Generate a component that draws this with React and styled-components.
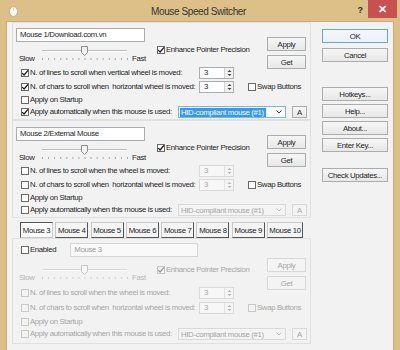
import styled, { createGlobalStyle } from "styled-components";

const TEXT = "#1e1e1e";
const DIM = "#a6a6a6";

const GlobalStyle = createGlobalStyle`
  * { box-sizing: border-box; }
  html, body { margin: 0; padding: 0; }
  body {
    width: 400px;
    height: 350px;
    overflow: hidden;
    background: #dcc088;
    font-family: "Liberation Sans", Arial, sans-serif;
    font-size: 7.8px;
    letter-spacing: -0.34px;
    color: ${TEXT};
  }
`;

const Window = styled.div`
  width: 400px;
  height: 350px;
  display: flex;
  flex-direction: column;
  background: #dcc088;
`;

const TitleBar = styled.div`
  height: 21px;
  flex-shrink: 0;
  display: grid;
  grid-template-columns: 1fr auto 1fr;
  align-items: start;
  padding-right: 3px;
`;

const AppIcon = styled.div`
  justify-self: start;
  display: flex;
  padding: 6px 0 0 9px;
`;

const Title = styled.div`
  font-size: 10px;
  letter-spacing: -0.4px;
  line-height: 12px;
  padding-top: 6px;
  color: #333;
`;

const Controls = styled.div`
  justify-self: end;
  display: flex;
  align-items: flex-start;
`;

const HelpGlyph = styled.span`
  font-size: 9px;
  font-weight: bold;
  letter-spacing: 0;
  color: #2b2b2b;
  margin: 5px 5px 0 0;
`;

const CloseButton = styled.div`
  width: 29px;
  height: 18px;
  background: #c75150;
  color: #fff;
  display: flex;
  align-items: center;
  justify-content: center;
  font-size: 11px;
  font-weight: bold;
  letter-spacing: 0;
`;

const Client = styled.div`
  flex: 1;
  min-height: 0;
  margin: 0 6px;
  background: #f2f2f2;
  border: 1px solid #c6ad7a;
  border-bottom: none;
  display: flex;
  gap: 11px;
  padding: 0 4px 0 5px;
`;

const LeftCol = styled.div`
  width: 299px;
  flex-shrink: 0;
  display: flex;
  flex-direction: column;
`;

const RightCol = styled.div`
  width: 66px;
  display: flex;
  flex-direction: column;
  padding-top: 7px;
`;

const Panel = styled.div`
  border: 1px solid #e0e0e0;
  padding-bottom: ${({ $pb }) => $pb || 0}px;
`;

const Top = styled.div`
  height: ${({ $h }) => $h}px;
  display: grid;
  grid-template-columns: 137px 117px 39px;
  align-items: start;
`;

const NameCol = styled.div`
  display: flex;
  flex-direction: column;
  padding-top: ${({ $pt }) => $pt}px;
`;

const MidCol = styled.div`
  padding: ${({ $pt }) => $pt}px 0 0 7px;
`;

const ButtonCol = styled.div`
  display: flex;
  flex-direction: column;
  gap: 4px;
  padding-top: ${({ $pt }) => $pt}px;
`;

const TextBox = styled.div`
  margin-left: ${({ $ml }) => $ml || 0}px;
  width: ${({ $w }) => $w}px;
  height: 14px;
  border: 1px solid ${({ $disabled }) => ($disabled ? "#d6d6d6" : "#abadb3")};
  background: ${({ $disabled }) => ($disabled ? "#f9f9f9" : "#fff")};
  color: ${({ $disabled }) => ($disabled ? "#9d9d9d" : TEXT)};
  padding-left: 3px;
  line-height: 12px;
  white-space: nowrap;
  overflow: hidden;
`;

const SliderBlock = styled.div`
  display: grid;
  grid-template-columns: 21px 90px auto;
  align-items: end;
  height: 20px;
  padding-left: 6px;
  margin-top: ${({ $mt }) => $mt}px;
  color: ${({ $disabled }) => ($disabled ? "#b4b4b4" : TEXT)};
`;

const SliderLabel = styled.span`
  line-height: 9px;
  margin-left: ${({ $ml }) => $ml || 0}px;
`;

const Row = styled.div`
  height: ${({ $h }) => $h}px;
  display: flex;
  align-items: center;
  padding-left: 8px;
`;

const CheckWrap = styled.div`
  display: flex;
  align-items: center;
  gap: 1px;
  width: ${({ $w }) => ($w ? `${$w}px` : "auto")};
  flex-shrink: 0;
  height: 10px;
  line-height: 10px;
  white-space: pre;
  color: ${({ $disabled }) => ($disabled ? DIM : TEXT)};
  margin-left: ${({ $ml }) => $ml || 0}px;
`;

const Box = styled.span`
  width: 8px;
  height: 8px;
  flex-shrink: 0;
  border: 1px solid ${({ $disabled }) => ($disabled ? "#c8c8c8" : "#6b6b6b")};
  background: ${({ $disabled }) => ($disabled ? "#f3f3f3" : "#fff")};
  display: flex;
  align-items: center;
  justify-content: center;
  overflow: visible;
`;

const Spin = styled.div`
  width: 35px;
  height: 12px;
  flex-shrink: 0;
  display: flex;
  border: 1px solid ${({ $disabled }) => ($disabled ? "#d9d9d9" : "#abadb3")};
  background: ${({ $disabled }) => ($disabled ? "#f7f7f7" : "#fff")};
  color: ${({ $disabled }) => ($disabled ? DIM : TEXT)};
`;

const SpinValue = styled.span`
  flex: 1;
  padding-left: 4px;
  line-height: 10px;
`;

const SpinArrows = styled.span`
  width: 9px;
  border-left: 1px solid ${({ $disabled }) => ($disabled ? "#e2e2e2" : "#d0d0d0")};
  background: ${({ $disabled }) => ($disabled ? "#f4f4f4" : "#f0f0f0")};
  display: flex;
  align-items: center;
  justify-content: center;
`;

const Combo = styled.div`
  width: 108px;
  height: 12px;
  flex-shrink: 0;
  display: flex;
  align-items: center;
  justify-content: space-between;
  padding: 1px 3px 1px 1px;
  border: 1px solid ${({ $disabled }) => ($disabled ? "#d9d9d9" : "#7eb4ea")};
  background: ${({ $disabled }) => ($disabled ? "#f4f4f4" : "#fff")};
  color: ${({ $disabled }) => ($disabled ? DIM : TEXT)};
`;

const ComboText = styled.span`
  height: 9px;
  line-height: 9px;
  padding: 0 2px 0 1px;
  white-space: nowrap;
  background: ${({ $selected }) => ($selected ? "#3399ff" : "transparent")};
  color: ${({ $selected }) => ($selected ? "#fff" : "inherit")};
`;

const Btn = styled.div`
  height: ${({ $h }) => $h || 14}px;
  width: ${({ $w }) => ($w ? `${$w}px` : "auto")};
  flex-shrink: 0;
  display: flex;
  align-items: center;
  justify-content: center;
  white-space: nowrap;
  margin-top: ${({ $mt }) => $mt || 0}px;
  margin-left: ${({ $ml }) => $ml || 0}px;
  border: 1px solid
    ${({ $disabled, $default }) =>
      $default ? "#6aa3d8" : $disabled ? "#d8d8d8" : "#acacac"};
  background: ${({ $disabled, $default }) =>
    $default
      ? "linear-gradient(#f4f8fc, #e9f1f9)"
      : $disabled
      ? "#f4f4f4"
      : "linear-gradient(#f6f6f6, #e8e8e8)"};
  color: ${({ $disabled }) => ($disabled ? DIM : TEXT)};
`;

const TabStrip = styled.div`
  display: flex;
  gap: 2.3px;
  height: 16px;
  margin-top: 4px;
  padding-left: 8px;
`;

const Tab = styled.div`
  width: ${({ $w }) => $w}px;
  display: flex;
  align-items: center;
  justify-content: center;
  white-space: nowrap;
  border: 1px solid;
  border-color: ${({ $active }) =>
    $active ? "#555 #c8c8c8 #c8c8c8 #555" : "#c8c8c8 #555 #555 #c8c8c8"};
  background: ${({ $active }) => ($active ? "#fff" : "#f4f4f4")};
`;

const EnabledRow = styled.div`
  height: 14px;
  margin-top: 4px;
  display: flex;
  align-items: center;
  padding-left: 8px;
  gap: 14px;
`;

const CheckMark = ({ color }) => (
  <svg width="8" height="8" viewBox="0 0 8 8" style={{ overflow: "visible" }}>
    <path d="M1.2 4.1 L3.1 6 L7 1.4" fill="none" stroke={color} strokeWidth="1.3" />
  </svg>
);

const CheckBox = ({ checked, disabled, w, ml, children }) => (
  <CheckWrap $w={w} $ml={ml} $disabled={disabled}>
    <Box $disabled={disabled}>
      {checked && <CheckMark color={disabled ? "#9a9a9a" : "#1a1a1a"} />}
    </Box>
    {children}
  </CheckWrap>
);

const SpinBox = ({ disabled }) => (
  <Spin $disabled={disabled}>
    <SpinValue>3</SpinValue>
    <SpinArrows $disabled={disabled}>
      <svg width="5" height="8" viewBox="0 0 5 8">
        <path d="M0.5 3 L2.5 1 L4.5 3 Z M0.5 5 L2.5 7 L4.5 5 Z" fill={disabled ? "#b5b5b5" : "#444"} />
      </svg>
    </SpinArrows>
  </Spin>
);

const Slider = ({ disabled, mt }) => {
  const ticks = Array.from({ length: 15 }, (_, i) => 2 + i * 6.07);
  const line = disabled ? "#d6d6d6" : "#bdbdbd";
  return (
    <SliderBlock $mt={mt} $disabled={disabled}>
      <SliderLabel>Slow</SliderLabel>
      <svg width="90" height="20" viewBox="0 0 90 20">
        <line x1="2" y1="7.5" x2="87" y2="7.5" stroke={line} />
        <line x1="2" y1="8.5" x2="87" y2="8.5" stroke="#fff" />
        {ticks.map((x) => (
          <rect key={x} x={x} y="15" width="1" height="2" fill={disabled ? "#d0d0d0" : "#a8a8a8"} />
        ))}
        <path
          d="M41.5 3.5 H47.5 V9.5 L44.5 12.5 L41.5 9.5 Z"
          fill={disabled ? "#f6f6f6" : "#f2f2f2"}
          stroke={disabled ? "#c4c4c4" : "#8c8c8c"}
        />
      </svg>
      <SliderLabel $ml={2}>Fast</SliderLabel>
    </SliderBlock>
  );
};

const Chevron = ({ color }) => (
  <svg width="6" height="4" viewBox="0 0 6 4">
    <path d="M0.5 0.5 L3 3 L5.5 0.5" fill="none" stroke={color} strokeWidth="1" />
  </svg>
);

const SettingRows = ({ heights, disabled, spinDisabled, comboDisabled, comboSelected, linesLabel, checks }) => (
  <>
    <Row $h={heights[0]}>
      <CheckBox w={178} checked={checks.lines} disabled={disabled}>{linesLabel}</CheckBox>
      <SpinBox disabled={spinDisabled} />
    </Row>
    <Row $h={heights[1]}>
      <CheckBox w={178} checked={checks.chars} disabled={disabled}>
        N. of chars to scroll when  horizontal wheel is moved:
      </CheckBox>
      <SpinBox disabled={spinDisabled} />
      <CheckBox ml={14} disabled={disabled}>Swap Buttons</CheckBox>
    </Row>
    <Row $h={heights[2]}>
      <CheckBox checked={checks.startup} disabled={disabled}>Apply on Startup</CheckBox>
    </Row>
    <Row $h={heights[3]}>
      <CheckBox w={157} checked={checks.auto} disabled={disabled}>
        Apply automatically when this mouse is used:
      </CheckBox>
      <Combo $disabled={comboDisabled}>
        <ComboText $selected={comboSelected}>HID-compliant mouse (#1)</ComboText>
        <Chevron color={comboDisabled ? "#bdbdbd" : "#444"} />
      </Combo>
      <Btn $w={15} $h={12} $ml={6} $disabled={comboDisabled}>A</Btn>
    </Row>
  </>
);

const MouseGroup = ({ name, nameTop, checks, spinDisabled, comboDisabled, comboSelected, linesLabel }) => (
  <Panel $pb={1}>
    <Top $h={43}>
      <NameCol $pt={nameTop}>
        <TextBox $ml={3} $w={129}>{name}</TextBox>
        <Slider mt={1} />
      </NameCol>
      <MidCol $pt={22}>
        <CheckBox checked>Enhance Pointer Precision</CheckBox>
      </MidCol>
      <ButtonCol $pt={14}>
        <Btn>Apply</Btn>
        <Btn>Get</Btn>
      </ButtonCol>
    </Top>
    <SettingRows
      heights={[14, 14, 12, 12]}
      checks={checks}
      spinDisabled={spinDisabled}
      comboDisabled={comboDisabled}
      comboSelected={comboSelected}
      linesLabel={linesLabel}
    />
  </Panel>
);

const tabs = ["Mouse 3", "Mouse 4", "Mouse 5", "Mouse 6", "Mouse 7", "Mouse 8", "Mouse 9", "Mouse 10"];

const TabPage = () => (
  <Panel $pb={3}>
    <EnabledRow>
      <CheckBox>Enabled</CheckBox>
      <TextBox $w={128} $disabled>Mouse 3</TextBox>
    </EnabledRow>
    <Top $h={29}>
      <NameCol $pt={0}>
        <Slider mt={5} disabled />
      </NameCol>
      <MidCol $pt={8}>
        <CheckBox checked disabled>Enhance Pointer Precision</CheckBox>
      </MidCol>
      <ButtonCol $pt={1}>
        <Btn $disabled>Apply</Btn>
        <Btn $disabled>Get</Btn>
      </ButtonCol>
    </Top>
    <SettingRows
      heights={[14, 16, 12, 12]}
      checks={{}}
      disabled
      spinDisabled
      comboDisabled
      linesLabel="N. of lines to scroll when the wheel is moved:"
    />
  </Panel>
);

const MouseIcon = () => (
  <svg width="9" height="11" viewBox="0 0 9 11">
    <ellipse cx="4.5" cy="5.5" rx="4" ry="5" fill="#fafafa" stroke="#b9a77f" strokeWidth="0.8" />
    <line x1="4.5" y1="0.8" x2="4.5" y2="4.5" stroke="#c9c0ad" strokeWidth="0.6" />
  </svg>
);

const App = () => (
  <>
    <GlobalStyle />
    <Window>
      <TitleBar>
        <AppIcon>
          <MouseIcon />
        </AppIcon>
        <Title>Mouse Speed Switcher</Title>
        <Controls>
          <HelpGlyph>?</HelpGlyph>
          <CloseButton>✕</CloseButton>
        </Controls>
      </TitleBar>
      <Client>
        <LeftCol>
          <MouseGroup
            name="Mouse 1/Download.com.vn"
            nameTop={5}
            checks={{ lines: true, chars: true, auto: true }}
            comboSelected
            linesLabel="N. of lines to scroll when vertical wheel is moved:"
          />
          <MouseGroup
            name="Mouse 2/External Mouse"
            nameTop={6}
            checks={{}}
            spinDisabled
            comboDisabled
            linesLabel="N. of lines to scroll when the wheel is moved:"
          />
          <TabStrip>
            {tabs.map((t, i) => (
              <Tab key={t} $w={t === "Mouse 10" ? 36 : 33} $active={i === 0}>
                {t}
              </Tab>
            ))}
          </TabStrip>
          <TabPage />
        </LeftCol>
        <RightCol>
          <Btn $default>OK</Btn>
          <Btn $mt={5}>Cancel</Btn>
          <Btn $mt={25}>Hotkeys...</Btn>
          <Btn $mt={3}>Help...</Btn>
          <Btn $mt={3}>About...</Btn>
          <Btn $mt={3}>Enter Key...</Btn>
          <Btn $mt={16}>Check Updates...</Btn>
        </RightCol>
      </Client>
    </Window>
  </>
);

export default App;
